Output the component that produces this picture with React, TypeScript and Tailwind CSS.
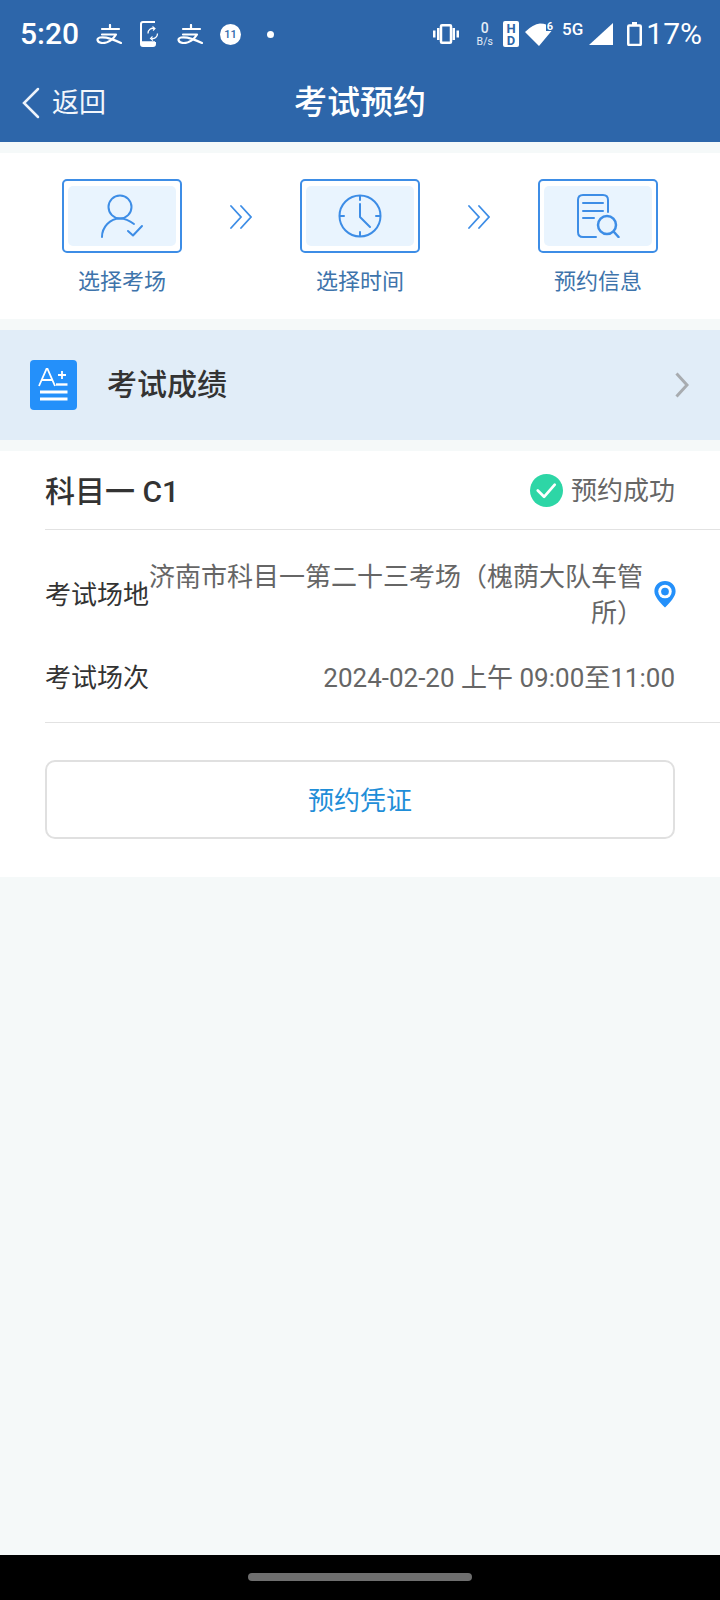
const cjk = { fontFamily: '"Roboto","Noto Sans CJK SC",sans-serif' };

function Alipay({ className }: { className?: string }) {
  return (
    <svg viewBox="0 0 26 20" className={className} fill="none" stroke="white" strokeWidth="2.200" strokeLinecap="round" strokeLinejoin="round">
      <path d="M6 5H23M14 1V5M6 10.500H20C17.500 15 12 19.500 6 19C1 18.500 0 14.500 4 13.500C10 12.500 18 15.500 25 19" />
    </svg>
  );
}

function Step({ label, children }: { label: string; children: React.ReactNode }) {
  return (
    <div className="flex w-[120px] flex-col items-center">
      <div className="flex h-[74px] w-[120px] shrink-0 rounded-[5px] border-2 border-[#3d8de6] bg-white px-[4px] py-[5px]">
        <div className="flex flex-1 items-center justify-center rounded-[5px] bg-[#e9f4fe]">{children}</div>
      </div>
      <div className="mt-[14px] text-[22px] leading-[30px] whitespace-nowrap text-[#3e74ab]">{label}</div>
    </div>
  );
}

function Chevrons() {
  return (
    <svg viewBox="0 0 22 24" className="mt-[26px] h-[24px] w-[22px] shrink-0" fill="none" stroke="#3d8de6" strokeWidth="1.800" strokeLinecap="round">
      <path d="M1 1L11 12L1 23M11 1L21 12L11 23" />
    </svg>
  );
}

export default function App() {
  return (
    <div className="flex h-[1600px] w-[720px] flex-col overflow-hidden bg-[#f5f9f9]" style={cjk}>
      <header className="h-[142px] shrink-0 bg-[#2d66aa] text-white">
        <div className="flex h-[68px] items-center pr-[18px] pl-[20px]">
          <span className="w-[58px] text-[30px] leading-none font-medium">5:20</span>
          <Alipay className="ml-[18px] h-[20px] w-[26px]" />
          <svg viewBox="0 0 19 26" className="ml-[18px] h-[26px] w-[19px]" fill="none" stroke="white" strokeWidth="2">
            <path d="M15 1H3Q1 1 1 3V23Q1 25 3 25H13Q15 25 15 23V21" />
            <path d="M1 22.500H15" strokeWidth="4.500" />
            <path d="M14.500 7.500A5 5 0 0 0 8 12.500M11.500 17.500A5 5 0 0 0 17.500 12.500" strokeWidth="1.300" />
            <path d="M12.500 5.500L15 7.500L13 9.500M13 19.500L10.500 17.500L12.500 15.500" strokeWidth="1.100" />
          </svg>
          <Alipay className="ml-[18px] h-[20px] w-[26px]" />
          <span className="ml-[17px] flex h-[21px] w-[21px] items-center justify-center rounded-full bg-white text-[11px] leading-none font-medium text-[#2d66aa]">11</span>
          <span className="ml-[26px] h-[7px] w-[7px] rounded-full bg-white" />
          <span className="flex-1" />
          <svg viewBox="0 0 26 20" className="h-[20px] w-[26px]" fill="white">
            <rect x="8" y="1.250" width="10" height="17.500" rx="1" fill="none" stroke="white" strokeWidth="2.500" />
            <rect x="4" y="4" width="2.500" height="12" />
            <rect x="0" y="6.500" width="2.500" height="7" />
            <rect x="19.500" y="4" width="2.500" height="12" />
            <rect x="23.500" y="6.500" width="2.500" height="7" />
          </svg>
          <div className="ml-[18px] flex w-[16px] flex-col items-center text-[#e4edf7]">
            <span className="text-[14px] leading-[14px] font-medium">0</span>
            <span className="text-[10.500px] leading-[13px] whitespace-nowrap">B/s</span>
          </div>
          <svg viewBox="0 0 16 26" className="ml-[10px] h-[26px] w-[16px]">
            <rect width="16" height="26" rx="2" fill="white" />
            <text x="8" y="12" fontSize="13" fontWeight="700" textAnchor="middle" fill="#2d66aa" fontFamily="Roboto">H</text>
            <text x="8" y="24" fontSize="13" fontWeight="700" textAnchor="middle" fill="#2d66aa" fontFamily="Roboto">D</text>
          </svg>
          <svg viewBox="0 0 28 23" className="ml-[6px] h-[23px] w-[28px]">
            <path d="M0 9Q8 1 15 0.500Q19 0.500 21 1.500V8H26.500L14 23Z" fill="white" />
          </svg>
          <span className="relative -top-[8px] -ml-[6px] text-[11px] leading-none font-bold">6</span>
          <span className="relative -top-[5px] ml-[9px] text-[17px] leading-none font-medium">5G</span>
          <svg viewBox="0 0 24 22" className="ml-[6px] h-[22px] w-[24px]"><path d="M0 22L24 0V22Z" fill="white" /></svg>
          <svg viewBox="0 0 15 24" className="ml-[14px] h-[24px] w-[15px]" fill="none" stroke="white" strokeWidth="2.500">
            <path d="M5 1.500H10" strokeWidth="3" />
            <rect x="1.250" y="3.500" width="12.500" height="19.500" rx="1" />
          </svg>
          <span className="ml-[4px] text-[30px] leading-none">17%</span>
        </div>
        <div className="grid h-[66px] grid-cols-[1fr_auto_1fr] items-center pt-[3px]">
          <div className="flex items-center pl-[22px]">
            <svg viewBox="0 0 18 32" className="h-[32px] w-[18px]" fill="none" stroke="#eef3fa" strokeWidth="2.500" strokeLinecap="round"><path d="M16 2L2 16L16 30" /></svg>
            <span className="ml-[12px] text-[27px] leading-[32px] text-[#f2f6fb]">返回</span>
          </div>
          <h1 className="text-[33px] leading-[44px] font-medium">考试预约</h1>
          <div />
        </div>
      </header>

      <section className="mt-[11px] flex h-[166px] shrink-0 justify-center gap-[48px] bg-white pt-[26px]">
        <Step label="选择考场">
          <svg viewBox="0 0 44 44" className="h-[44px] w-[44px]" fill="none" stroke="#3d8de6" strokeWidth="2" strokeLinecap="round" strokeLinejoin="round">
            <circle cx="20" cy="13" r="11.500" />
            <path d="M2 43C2 33 10 24.500 20 24.500C26 24.500 30 27 34 30M28 37L33 41.500L42 32" />
          </svg>
        </Step>
        <Chevrons />
        <Step label="选择时间">
          <svg viewBox="0 0 44 44" className="h-[44px] w-[44px]" fill="none" stroke="#3d8de6" strokeWidth="2" strokeLinecap="round" strokeLinejoin="round">
            <circle cx="22" cy="22" r="20.500" />
            <path d="M22 2V6M22 38V42M2 22H6M38 22H42M22 10V23L32 33" />
          </svg>
        </Step>
        <Chevrons />
        <Step label="预约信息">
          <svg viewBox="0 0 44 44" className="h-[44px] w-[44px]" fill="none" stroke="#3d8de6" strokeWidth="2" strokeLinecap="round">
            <path d="M20 43H7Q2 43 2 38V6Q2 1 7 1H27Q32 1 32 6V18M7 9H27M7 17H27M7 24H18" />
            <circle cx="31" cy="31" r="9" strokeWidth="2.500" />
            <path d="M38 38L42.500 43" strokeWidth="2.500" />
          </svg>
        </Step>
      </section>

      <section className="mt-[11px] flex h-[110px] shrink-0 items-center bg-[#e1edf8] pr-[31px] pl-[30px]">
        <div className="flex h-[50px] w-[47px] items-center justify-center rounded-[4px] bg-[#2490fa]">
          <svg viewBox="0 0 47 50" className="h-[50px] w-[47px]" fill="none" stroke="white" strokeWidth="1.800">
            <path d="M9 26L16.500 9H17.500L25 26M12 20H22M28 15H36M32 11V19" />
            <path d="M26 24.500H37.500" strokeWidth="2.400" />
            <path d="M10 32H37.500M10 39H37.500" strokeWidth="2.800" />
          </svg>
        </div>
        <span className="ml-[30px] flex-1 text-[30px] leading-[40px] font-medium text-[#333]">考试成绩</span>
        <svg viewBox="0 0 14 26" className="h-[26px] w-[14px]" fill="none" stroke="#a8acb0" strokeWidth="3"><path d="M1.500 1.500L12 13L1.500 24.500" /></svg>
      </section>

      <section className="mt-[11px] h-[426px] shrink-0 bg-white pl-[45px]">
        <div className="flex h-[79px] items-center border-b border-[#e2e2e2] pr-[45px]">
          <span className="flex-1 pt-[3px] text-[30px] leading-[40px] font-medium text-[#333]">科目一 C1</span>
          <svg viewBox="0 0 34 34" className="h-[33px] w-[33px]">
            <circle cx="17" cy="17" r="17" fill="#2dd6a6" />
            <path d="M8 17L14.500 23.500L25.500 11" fill="none" stroke="white" strokeWidth="2.800" strokeLinecap="round" strokeLinejoin="round" />
          </svg>
          <span className="ml-[8px] pt-[2px] text-[26px] leading-[36px] text-[#666]">预约成功</span>
        </div>
        <div className="flex pt-[29px]">
          <span className="w-[103px] shrink-0 pt-[19px] text-[26px] leading-[34px] whitespace-nowrap text-[#333]">考试场地</span>
          <span className="w-[495px] shrink-0 text-right text-[26px] leading-[36px] text-[#666]">济南市科目一第二十三考场（槐荫大队车管所）</span>
          <svg viewBox="0 0 22 28" className="mt-[22px] ml-[11px] h-[27px] w-[22px]">
            <path d="M11 0C4.500 0 0 4.800 0 10.500C0 16.500 6 22 11 27.500C16 22 22 16.500 22 10.500C22 4.800 17.500 0 11 0Z" fill="#2490fa" />
            <circle cx="11" cy="11" r="7" fill="white" />
            <circle cx="11" cy="11" r="4" fill="#2490fa" />
          </svg>
        </div>
        <div className="flex items-center justify-between pt-[29px] pr-[45px] pb-[26px]">
          <span className="text-[26px] leading-[36px] text-[#333]">考试场次</span>
          <span className="text-[26px] leading-[36px] text-[#666]">2024-02-20 上午 09:00至11:00</span>
        </div>
        <div className="border-t border-[#e2e2e2] pt-[37px] pr-[45px]">
          <div className="flex h-[79px] items-center justify-center rounded-[10px] border-2 border-[#e0e0e0] pt-[3px] text-[26px] text-[#1f8ed8]">预约凭证</div>
        </div>
      </section>

      <div className="flex-1" />
      <footer className="flex h-[45px] shrink-0 justify-center bg-black pt-[18px]">
        <div className="h-[8px] w-[224px] rounded-full bg-[#6e6e6e]" />
      </footer>
    </div>
  );
}
